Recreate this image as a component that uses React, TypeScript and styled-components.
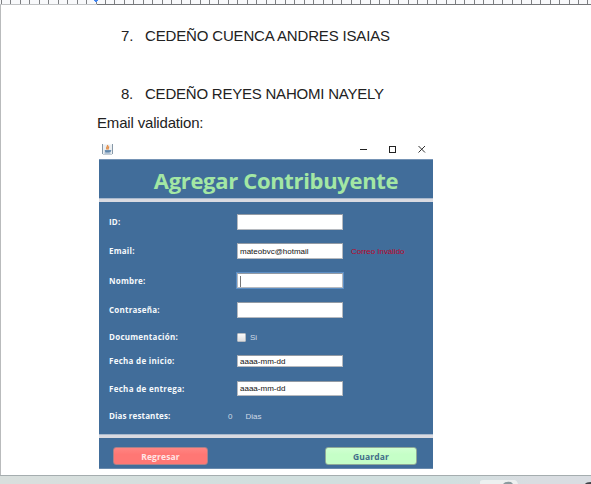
import React from "react";
import styled, { createGlobalStyle } from "styled-components";

const Global = createGlobalStyle`
  * { box-sizing: border-box; }
  body { margin: 0; background: #fff; overflow: hidden; }
`;

const Screen = styled.div`
  width: 591px;
  height: 484px;
  display: flex;
  flex-direction: column;
  overflow: hidden;
  font-family: "Liberation Sans", sans-serif;
`;

const RulerBar = styled.svg`
  display: block;
  width: 591px;
  height: 5px;
  flex: none;
  background: #f8f9fb;
`;

const Sheet = styled.main`
  flex: none;
  height: 470px;
  border-left: 1px solid #b9bbbc;
  padding-left: 96px;
  background: #fff;
`;

const ListItem = styled.div<{ $top: number; $track: number }>`
  display: flex;
  margin-top: ${(p) => p.$top}px;
  padding-left: 24px;
  height: 20px;
  line-height: 20px;
  font-size: 15px;
  letter-spacing: ${(p) => p.$track}px;
  color: #222;
  white-space: nowrap;
`;

const Index = styled.span`
  width: 24px;
  flex: none;
`;

const Paragraph = styled.p`
  margin: 9px 0 0;
  height: 20px;
  line-height: 20px;
  font-size: 15px;
  letter-spacing: -0.17px;
  color: #222;
`;

const Window = styled.section`
  width: 334px;
  margin: 7px 0 0 2px;
`;

const TitleBar = styled.div`
  height: 19px;
  display: flex;
  align-items: flex-start;
  justify-content: space-between;
  padding: 4px 7px 0 3px;
`;

const WindowControls = styled.div`
  display: flex;
  gap: 21px;
`;

const Heading = styled.h1`
  margin: 0;
  height: 39px;
  padding-left: 20px;
  border-top: 1px solid #7593b5;
  background: #416d9a;
  color: #a3e7a4;
  font: 700 22px/40px "Open Sans", sans-serif;
  letter-spacing: -0.33px;
  text-align: center;
  white-space: nowrap;
`;

const Divider = styled.div`
  height: 4px;
  background: #d9dae1;
  border-top: 1px solid #a9b9cd;
`;

const Fields = styled.div`
  height: 232px;
  background: #416d9a;
  padding: 12px 0 0 10px;
`;

const Line = styled.div<{ $h: number; $gap: number }>`
  display: flex;
  align-items: center;
  white-space: nowrap;
  height: ${(p) => p.$h}px;
  margin-bottom: ${(p) => p.$gap}px;
`;

const Label = styled.label<{ $track?: number }>`
  width: 128px;
  flex: none;
  font: 700 8px/16px "Open Sans", sans-serif;
  letter-spacing: ${(p) => p.$track ?? 0.22}px;
  color: #f6f9fc;
`;

const Field = styled.div<{ $focus?: boolean }>`
  width: 106px;
  height: 100%;
  flex: none;
  display: flex;
  align-items: center;
  padding: 1px 0 0 2px;
  background: #fff;
  border: 1px solid #b5b9bf;
  border-top-color: #929aa4;
  box-shadow: ${(p) => (p.$focus ? "0 0 0 1px #5c8ec4" : "none")};
  font-size: 8px;
  line-height: 10px;
  color: #111;
`;

const Caret = styled.span`
  width: 1px;
  height: 11px;
  background: #777;
`;

const ErrorText = styled.span`
  margin-left: 8px;
  font-size: 8px;
  letter-spacing: -0.05px;
  color: #bd0428;
`;

const CheckBox = styled.span`
  width: 9px;
  height: 9px;
  border: 1px solid #b4bac1;
  border-radius: 1px;
  background: linear-gradient(#fafafa, #dedfe1);
`;

const Note = styled.span<{ $left: number }>`
  margin-left: ${(p) => p.$left}px;
  font-size: 8px;
  color: #cfdae6;
`;

const Footer = styled.div`
  height: 31px;
  display: flex;
  justify-content: space-between;
  align-items: flex-start;
  padding: 9px 16px 0 14px;
  background: #416d9a;
  border-bottom: 1px solid #6a8bae;
`;

const Button = styled.button<{ $kind: "back" | "save" }>`
  width: ${(p) => (p.$kind === "back" ? 95 : 92)}px;
  height: 18px;
  padding: 1px 0 0;
  border: 1px solid ${(p) => (p.$kind === "back" ? "#aa8088" : "#8eaa98")};
  border-radius: 3px;
  background: ${(p) => (p.$kind === "back" ? "linear-gradient(#ff8582, #ff7774 40%)" : "linear-gradient(#d0ffd1, #c5ffc7 40%)")};
  color: ${(p) => (p.$kind === "back" ? "#ffe5e5" : "#416d89")};
  font: 700 8.5px/15px "Open Sans", sans-serif;
  letter-spacing: 0.15px;
`;

const Taskbar = styled.div`
  height: 9px;
  flex: none;
  display: flex;
  justify-content: flex-end;
  border-top: 1px solid #a5adaf;
  background: linear-gradient(90deg, #d9dfdd, #d1dfde 45%, #d1dfdf 76%, #d9dde1 90%, #d9dde2);
`;

const ticks = Array.from({ length: 63 }, (_, i) => Math.round(0.9 + i * 9.46));

function Ruler() {
  return (
    <RulerBar viewBox="0 0 591 5" shapeRendering="crispEdges">
      {ticks.map((x) => (
        <rect key={x} x={x} width="1" height="4" fill="#7d7f82" />
      ))}
      <rect y="4" width="97" height="1" fill="#c0c2c4" />
      <rect x="97" y="4" width="494" height="1" fill="#747679" />
      <path d="M94 0H98V1H97V2H95V1H94Z" fill="#3f83ee" />
    </RulerBar>
  );
}

function JavaIcon() {
  return (
    <svg width="11" height="11" viewBox="0 0 11 11">
      <rect x=".5" y=".5" width="10" height="10" fill="#eceff2" />
      <path d="M.5 0V10M10.5 0V10" fill="none" stroke="#8799a8" />
      <path d="M1 10.5H10" stroke="#c3ccd4" />
      <path d="M5.5 1C6.5 2.5 3.5 3 5 5.5M7 2.5C5.5 4 6.5 4.5 6 5.5" fill="none" stroke="#e38c45" strokeWidth="1.3" />
      <path d="M3 6.5H7.5V8H3.5ZM7.5 6.5H9L8 8M2.5 9H8.5" fill="#5f86ab" stroke="#5f86ab" strokeWidth=".8" />
    </svg>
  );
}

function Controls() {
  return (
    <WindowControls>
      <svg width="8" height="10"><path d="M1 5.5H8" stroke="#222" /></svg>
      <svg width="8" height="10"><rect x="1.5" y="2.5" width="6" height="6" fill="none" stroke="#222" /></svg>
      <svg width="9" height="10"><path d="M1.5 2L8 8.5M8 2L1.5 8.5" stroke="#333" /></svg>
    </WindowControls>
  );
}

export default function App() {
  return (
    <>
      <Global />
      <Screen>
        <Ruler />
        <Sheet>
          <ListItem $top={21} $track={-0.16}><Index>7.</Index>CEDEÑO CUENCA ANDRES ISAIAS</ListItem>
          <ListItem $top={38} $track={-0.22}><Index>8.</Index>CEDEÑO REYES NAHOMI NAYELY</ListItem>
          <Paragraph>Email validation:</Paragraph>
          <Window>
            <TitleBar><JavaIcon /><Controls /></TitleBar>
            <Heading>Agregar Contribuyente</Heading>
            <Divider />
            <Fields>
              <Line $h={16} $gap={13}><Label>ID:</Label><Field /></Line>
              <Line $h={16} $gap={14}><Label>Email:</Label><Field>mateobvc@hotmail</Field><ErrorText>Correo Inválido</ErrorText></Line>
              <Line $h={15} $gap={14}><Label>Nombre:</Label><Field $focus><Caret /></Field></Line>
              <Line $h={16} $gap={11}><Label>Contraseña:</Label><Field /></Line>
              <Line $h={16} $gap={10}><Label $track={0.25}>Documentación:</Label><CheckBox /><Note $left={4}>Si</Note></Line>
              <Line $h={12} $gap={14}><Label $track={0.28}>Fecha de inicio:</Label><Field>aaaa-mm-dd</Field></Line>
              <Line $h={15} $gap={12}><Label $track={0.29}>Fecha de entrega:</Label><Field>aaaa-mm-dd</Field></Line>
              <Line $h={16} $gap={0}><Label $track={0.12}>Dias restantes:</Label><Note $left={-9}>0</Note><Note $left={13}>Dias</Note></Line>
            </Fields>
            <Divider />
            <Footer><Button $kind="back">Regresar</Button><Button $kind="save">Guardar</Button></Footer>
          </Window>
        </Sheet>
        <Taskbar>
          <svg width="116" height="8">
            <path d="M5 8V6Q5 4 8 4H39Q42 4 43 8Z" fill="#edf0f0" />
            <path d="M28 8Q30 5 36 6L38 8Z" fill="#8b9b9f" />
            <path d="M110 8Q111 6 116 6V8Z" fill="#424449" />
          </svg>
        </Taskbar>
      </Screen>
    </>
  );
}
